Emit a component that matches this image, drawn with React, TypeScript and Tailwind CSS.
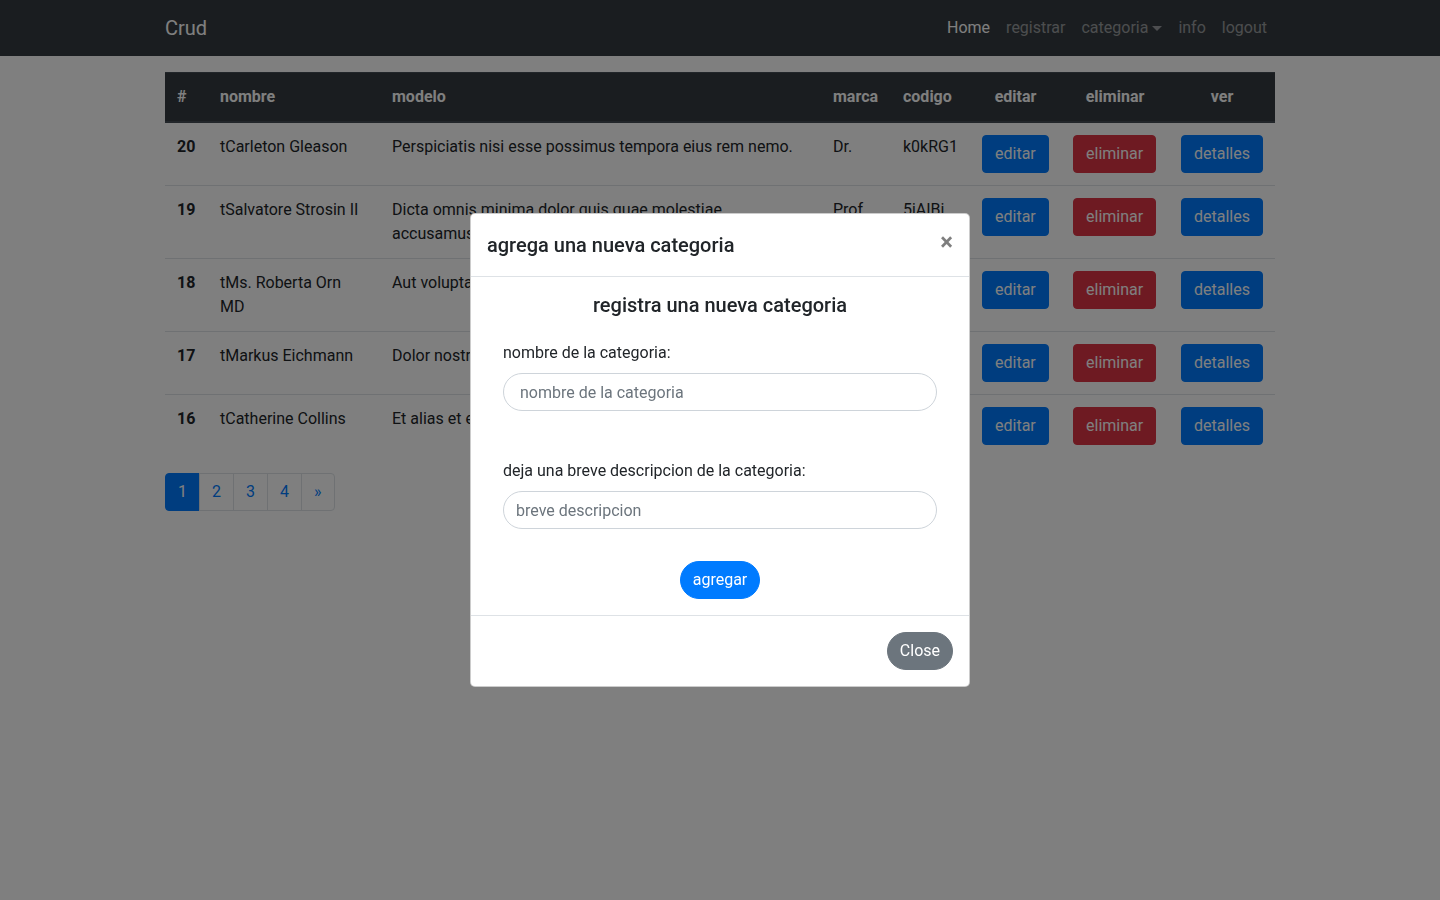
import React from 'react';

interface Producto {
  id: number;
  nombre: string;
  modelo: string;
  marca: string;
  codigo: string;
}

const productos: Producto[] = [
  { id: 20, nombre: 'tCarleton Gleason', modelo: 'Perspiciatis nisi esse possimus tempora eius rem nemo.', marca: 'Dr.', codigo: 'k0kRG1' },
  { id: 19, nombre: 'tSalvatore Strosin II', modelo: 'Dicta omnis minima dolor quis quae molestiae accusamus.', marca: 'Prof.', codigo: '5jAIBi' },
  { id: 18, nombre: 'tMs. Roberta Orn MD', modelo: 'Aut voluptatem quia facere aut.', marca: 'Mrs.', codigo: 'Xy7pQ2' },
  { id: 17, nombre: 'tMarkus Eichmann', modelo: 'Dolor nostrum sit sunt quia.', marca: 'Mr.', codigo: 'aB3kLm' },
  { id: 16, nombre: 'tCatherine Collins', modelo: 'Et alias et eum quis velit.', marca: 'Ms.', codigo: 'Qw9ErT' },
];

const Navbar: React.FC = () => (
  <nav className="bg-[#343a40] h-14">
    <div className="w-[1140px] mx-auto px-[15px] h-full flex items-center justify-between">
      <a className="text-white text-xl leading-[30px]">Crud</a>
      <ul className="flex items-center">
        <li className="px-2 text-white">Home</li>
        <li className="px-2 text-white/50">registrar</li>
        <li className="px-2 text-white/50 flex items-center">
          categoria
          <span className="ml-[4px] w-0 h-0 border-x-[5px] border-x-transparent border-t-[5px] border-t-white/50" />
        </li>
        <li className="px-2 text-white/50">info</li>
        <li className="px-2 text-white/50">logout</li>
      </ul>
    </div>
  </nav>
);

const Tabla: React.FC = () => (
  <table className="w-full table-fixed mb-4 text-[#212529]">
    <thead className="bg-[#343a40] text-white">
      <tr className="border-t border-b-2 border-[#454d55]">
        <th className="w-[43px] p-3 text-left font-bold">#</th>
        <th className="w-[172px] p-3 text-left font-bold">nombre</th>
        <th className="w-[441px] p-3 text-left font-bold">modelo</th>
        <th className="w-[70px] p-3 text-left font-bold">marca</th>
        <th className="w-[79px] p-3 text-left font-bold">codigo</th>
        <th className="w-[91px] p-3 text-center font-bold">editar</th>
        <th className="w-[108px] p-3 text-center font-bold">eliminar</th>
        <th className="w-[106px] p-3 text-center font-bold">ver</th>
      </tr>
    </thead>
    <tbody>
      {productos.map((p) => (
        <tr key={p.id} className="border-t border-[#dee2e6] align-top">
          <td className="p-3 font-bold">{p.id}</td>
          <td className="p-3">{p.nombre}</td>
          <td className="p-3">{p.modelo}</td>
          <td className="p-3">{p.marca}</td>
          <td className="p-3">{p.codigo}</td>
          <td className="p-3">
            <button className="bg-[#007bff] border border-[#007bff] text-white px-3 py-1.5 rounded">editar</button>
          </td>
          <td className="p-3">
            <button className="bg-[#dc3545] border border-[#dc3545] text-white px-3 py-1.5 rounded">eliminar</button>
          </td>
          <td className="p-3">
            <button className="bg-[#007bff] border border-[#007bff] text-white px-3 py-1.5 rounded">detalles</button>
          </td>
        </tr>
      ))}
    </tbody>
  </table>
);

const Paginacion: React.FC = () => (
  <ul className="flex">
    <li className="px-3 py-2 leading-5 border border-[#007bff] bg-[#007bff] text-white rounded-l">1</li>
    {['2', '3', '4'].map((n) => (
      <li key={n} className="-ml-px px-3 py-2 leading-5 border border-[#dee2e6] text-[#007bff]">{n}</li>
    ))}
    <li className="-ml-px px-3 py-2 leading-5 border border-[#dee2e6] text-[#007bff] rounded-r">&raquo;</li>
  </ul>
);

const ModalCategoria: React.FC = () => (
  <div className="fixed inset-0 flex items-center justify-center">
    <div className="w-[500px] bg-white border border-black/20 rounded-[5px] text-[#212529]">
      <div className="flex items-start justify-between p-4 border-b border-[#dee2e6]">
        <h5 className="text-xl font-medium leading-[1.5]">agrega una nueva categoria</h5>
        <button className="text-2xl font-bold leading-none text-black opacity-50">&times;</button>
      </div>
      <div className="p-4 border-b border-[#dee2e6]">
        <h5 className="text-xl font-medium leading-[1.2] text-center">registra una nueva categoria</h5>
        <form className="px-4 mt-6">
          <label className="block mb-2">nombre de la categoria:</label>
          <input
            className="block w-full h-[38px] pl-4 pr-3 border border-[#ced4da] rounded-full placeholder:text-[#6c757d] outline-none"
            placeholder="nombre de la categoria"
          />
          <label className="block mt-12 mb-2">deja una breve descripcion de la categoria:</label>
          <input
            className="block w-full h-[38px] px-3 border border-[#ced4da] rounded-full placeholder:text-[#6c757d] outline-none"
            placeholder="breve descripcion"
          />
          <div className="flex justify-center mt-8">
            <button type="button" className="bg-[#007bff] border border-[#007bff] text-white px-3 py-1.5 rounded-full">agregar</button>
          </div>
        </form>
      </div>
      <div className="flex justify-end px-3 py-3">
        <button className="m-1 bg-[#6c757d] border border-[#6c757d] text-white px-3 py-1.5 rounded-full">Close</button>
      </div>
    </div>
  </div>
);

export default function App() {
  return (
    <div className="min-h-screen bg-white font-[Roboto,sans-serif] text-base leading-6 text-[#212529]">
      <Navbar />
      <div className="w-[1140px] mx-auto px-[15px] mt-4">
        <Tabla />
        <Paginacion />
      </div>
      <div className="fixed inset-0 bg-black/50" />
      <ModalCategoria />
    </div>
  );
}
